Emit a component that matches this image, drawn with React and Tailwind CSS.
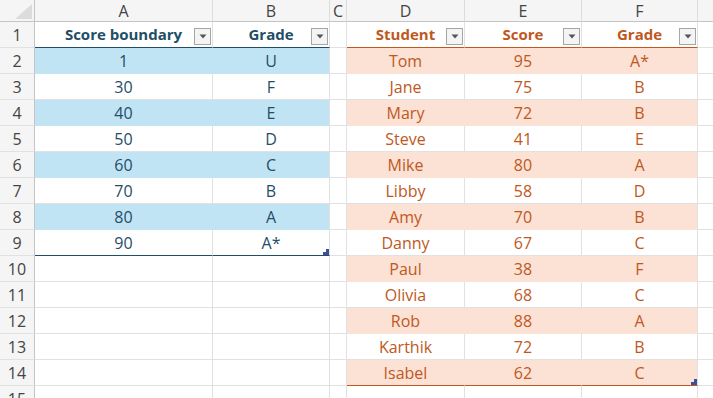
import React from 'react';

const cols = ['A', 'B', 'C', 'D', 'E', 'F', 'G'];

const left = [
  ['1', 'U'], ['30', 'F'], ['40', 'E'], ['50', 'D'],
  ['60', 'C'], ['70', 'B'], ['80', 'A'], ['90', 'A*'],
];

const right = [
  ['Tom', '95', 'A*'], ['Jane', '75', 'B'], ['Mary', '72', 'B'], ['Steve', '41', 'E'],
  ['Mike', '80', 'A'], ['Libby', '58', 'D'], ['Amy', '70', 'B'], ['Danny', '67', 'C'],
  ['Paul', '38', 'F'], ['Olivia', '68', 'C'], ['Rob', '88', 'A'], ['Karthik', '72', 'B'],
  ['Isabel', '62', 'C'],
];

function FilterButton() {
  return (
    <span className="absolute right-[1px] top-[6px] w-[17px] h-[17px] border border-[#a6a6a6] bg-[#f4f4f4] flex items-center justify-center">
      <svg width="8" height="5" viewBox="0 0 8 5">
        <polygon points="0.5,0.5 7.5,0.5 4,4.5" fill="#555" />
      </svg>
    </span>
  );
}

function Handle() {
  return (
    <svg className="absolute right-0 bottom-0" width="6" height="6" viewBox="0 0 6 6">
      <polygon points="6,0 6,6 0,6 0,3 3,3 3,0" fill="#3b4f9c" />
    </svg>
  );
}

function Cell({ children, className = '', extra = null }) {
  return (
    <div className={`relative h-[26px] flex items-center justify-center border-r border-b ${className}`}>
      {children}
      {extra}
    </div>
  );
}

export default function App() {
  const rows = [];
  for (let r = 1; r <= 15; r++) {
    const cells = [];
    // A, B
    if (r === 1) {
      cells.push(
        <Cell key="A" className="border-r-[#e1e1e1] border-b-[#1f4e66] bg-white text-[#1f4e66] font-bold text-[15px]" extra={<FilterButton />}>Score boundary</Cell>,
        <Cell key="B" className="border-r-[#e1e1e1] border-b-[#1f4e66] bg-white text-[#1f4e66] font-bold text-[15px]" extra={<FilterButton />}>Grade</Cell>
      );
    } else if (r <= 9) {
      const [s, g] = left[r - 2];
      const band = r % 2 === 0;
      const last = r === 9;
      const base = band
        ? 'bg-[#c1e4f5] border-r-[#c1e4f5] border-b-[#c1e4f5]'
        : 'bg-white border-r-[#e1e1e1] border-b-[#e1e1e1]';
      const lastCls = last ? ' !border-b-[#1f4e66]' : '';
      cells.push(
        <Cell key="A" className={`${base}${lastCls} text-[#1f4e66]`}>{s}</Cell>,
        <Cell key="B" className={`${band ? 'bg-[#c1e4f5] border-r-[#e1e1e1] border-b-[#c1e4f5]' : base}${lastCls} text-[#1f4e66]`} extra={last ? <Handle /> : null}>{g}</Cell>
      );
    } else {
      cells.push(
        <Cell key="A" className="border-[#e1e1e1]" />,
        <Cell key="B" className="border-[#e1e1e1]" />
      );
    }
    // C
    cells.push(<Cell key="C" className="border-[#e1e1e1]" />);
    // D, E, F
    if (r === 1) {
      ['Student', 'Score', 'Grade'].forEach((h) =>
        cells.push(
          <Cell key={h} className="border-r-[#e1e1e1] border-b-[#c0581e] bg-white text-[#c0581e] font-bold text-[15px]" extra={<FilterButton />}>{h}</Cell>
        )
      );
    } else if (r <= 14) {
      const vals = right[r - 2];
      const band = r % 2 === 0;
      const last = r === 14;
      vals.forEach((v, i) => {
        const isLastCol = i === 2;
        let cls = band
          ? `bg-[#fbe2d5] border-b-[#fbe2d5] ${isLastCol ? 'border-r-[#e1e1e1]' : 'border-r-[#fbe2d5]'}`
          : 'bg-white border-r-[#e1e1e1] border-b-[#e1e1e1]';
        if (last) cls += ' !border-b-[#c0581e]';
        cells.push(
          <Cell key={i} className={`${cls} text-[#c0581e]`} extra={last && isLastCol ? <Handle /> : null}>{v}</Cell>
        );
      });
    } else {
      cells.push(
        <Cell key="D" className="border-[#e1e1e1]" />,
        <Cell key="E" className="border-[#e1e1e1]" />,
        <Cell key="F" className="border-[#e1e1e1]" />
      );
    }
    // G
    cells.push(<Cell key="G" className="border-[#e1e1e1]" />);

    rows.push(
      <React.Fragment key={r}>
        <div className="h-[26px] flex items-center justify-center bg-[#f5f5f5] border-r border-r-[#c4c4c4] border-b border-b-[#e1e1e1] text-[#444]">
          {r}
        </div>
        {cells}
      </React.Fragment>
    );
  }

  return (
    <div
      className="w-[713px] h-[398px] overflow-hidden bg-white text-[16px]"
      style={{ fontFamily: '"Open Sans", "Liberation Sans", sans-serif' }}
    >
      <div className="grid w-[830px] grid-cols-[35px_178px_117px_17px_118px_117px_116px_132px] auto-rows-min">
        <div className="relative h-[22px] bg-[#f5f5f5] border-r border-r-[#c4c4c4] border-b border-b-[#c4c4c4]">
          <svg className="absolute right-[2px] bottom-[2px]" width="17" height="15" viewBox="0 0 17 15">
            <polygon points="17,0 17,15 0,15" fill="#dcdcdc" />
          </svg>
        </div>
        {cols.map((c) => (
          <div
            key={c}
            className="h-[22px] flex items-center justify-center bg-[#f5f5f5] border-r border-r-[#dcdcdc] border-b border-b-[#c4c4c4] text-[#444]"
          >
            {c}
          </div>
        ))}
        {rows}
      </div>
    </div>
  );
}
